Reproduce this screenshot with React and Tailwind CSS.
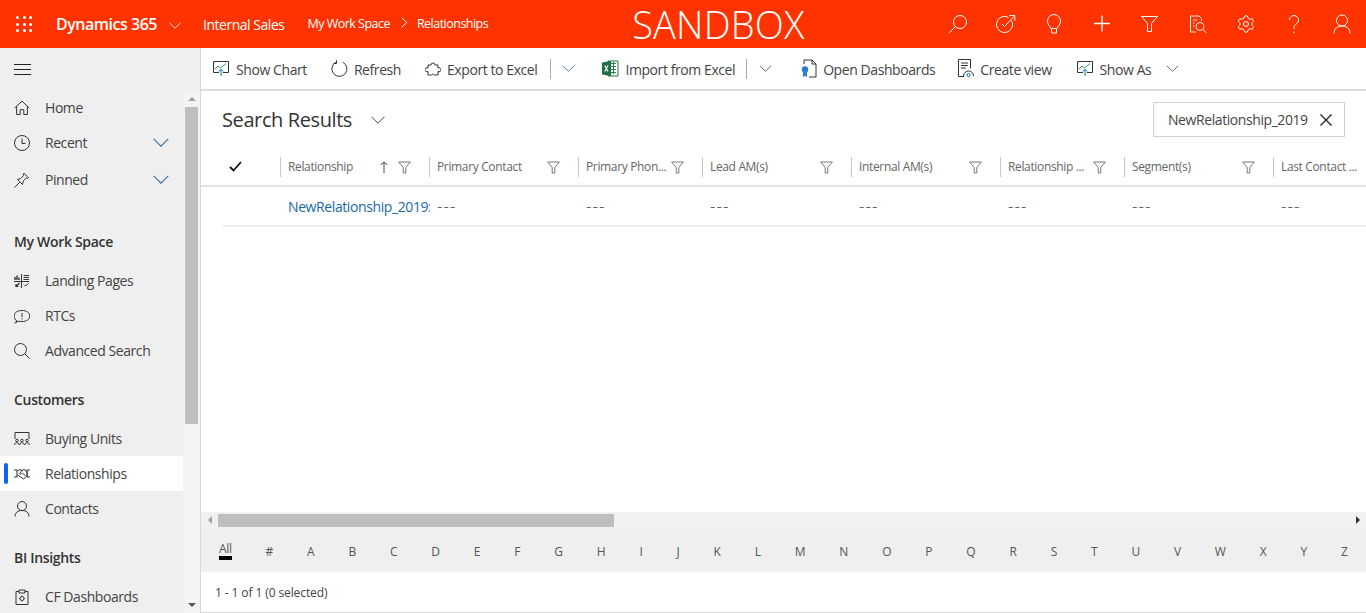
import React from "react";
import { Settings } from "lucide-react";

const font = { fontFamily: '"Open Sans", sans-serif' };

// thin line icon wrapper
const Ic = ({ size = 16, vb = 16, className = "", children, sw = 1 }) => (
  <svg
    width={size}
    height={size}
    viewBox={`0 0 ${vb} ${vb}`}
    fill="none"
    stroke="currentColor"
    strokeWidth={sw}
    className={`shrink-0 ${className}`}
  >
    {children}
  </svg>
);

const Chevron = ({ w = 14, h = 8, className = "" }) => (
  <svg width={w} height={h} viewBox="0 0 14 8" fill="none" stroke="currentColor" className={`shrink-0 ${className}`}>
    <path d="M.5.8 7 7.2 13.5.8" />
  </svg>
);

const Funnel = () => (
  <svg width="13" height="13" viewBox="0 0 13 13" fill="none" stroke="#777" className="shrink-0">
    <path d="M.6 1h11.8L7.8 6.4V12H5.2V6.4z" />
  </svg>
);

const ChartIcon = () => (
  <Ic size={17} vb={17} className="text-[#333]">
    <path d="M6 12.5H.5v-11h15v11H10" />
    <path d="M2 9l3-3 2.5 2L13 3.5" stroke="#2f9e5b" />
    <path d="M8 16V9.5M5.8 11.5 8 9.3l2.2 2.2" stroke="#106ebe" />
  </Ic>
);

const RefreshIcon = () => (
  <Ic size={17} vb={17} className="text-[#333]">
    <path d="M5 2.2a7.5 7.5 0 1 0 6.8 0" />
    <path d="M5.5.3v3.2H2.4" />
  </Ic>
);

const PuzzleIcon = () => (
  <Ic size={16} className="text-[#333]">
    <path d="M3 4h3a2 2 0 1 1 4 0h3v3a2 2 0 1 1 0 3.5V14H9.5a1.8 1.8 0 0 0-3 0H3v-3.5a2 2 0 1 1 0-3.500z" />
  </Ic>
);

const ExcelIcon = () => (
  <svg width="17" height="17" viewBox="0 0 17 17" className="shrink-0">
    <path d="M6 1h10v15H6z" fill="#fff" stroke="#1e7145" />
    <path d="M9 3.5h5M9 6.5h5M9 9.5h5M9 12.5h5M11.5 2v12" stroke="#1e7145" strokeWidth=".9" />
    <path d="M0 2.5 9 1v15l-9-1.5z" fill="#1e7145" />
    <path d="M2.8 5.5 6 11.5M6 5.5l-3.2 6" stroke="#fff" strokeWidth="1.2" />
  </svg>
);

const DashDocIcon = () => (
  <svg width="16" height="19" viewBox="0 0 16 19" fill="none" className="shrink-0">
    <path d="M3 5V1h8l4 4v13H8" stroke="#333" />
    <path d="M11 1v4h4" stroke="#333" />
    <circle cx="4" cy="10.5" r="3.2" fill="#2b7cd3" />
    <path d="M2 13v5l2-1.2L6 18v-5z" fill="#2b7cd3" />
  </svg>
);

const CreateViewIcon = () => (
  <svg width="16" height="19" viewBox="0 0 16 19" fill="none" stroke="#333" className="shrink-0">
    <path d="M6 17.5H.5V.5h12v9" />
    <path d="M3 4h7M3 6.5h7M3 9h5" />
    <path d="M5.5 17a5 5 0 0 1 10 0" />
    <circle cx="10.5" cy="16" r="1.6" stroke="#106ebe" />
  </svg>
);

const ToolButton = ({ icon, label, className = "" }) => (
  <div className={`flex items-center ${className}`}>
    {icon}
    <span className="ml-[6px] mt-[2px] text-[14px] tracking-[-0.42px] text-[#444] whitespace-nowrap">{label}</span>
  </div>
);

const navIcons = {
  home: (
    <Ic size={16}>
      <path d="M.7 8 8 1.2 15.3 8M2.6 6.5V14.5h3.6V9.7h3.6v4.8h3.6V6.5" />
    </Ic>
  ),
  clock: (
    <Ic size={16}>
      <circle cx="8" cy="8" r="7.5" />
      <path d="M8 3.5V8.5H11.5" />
    </Ic>
  ),
  pin: (
    <Ic size={16}>
      <path d="M.5 15.5 5.5 10.5M3.5 7.5l5 5 .8-3.6 3-2.900 1.400.5.8-.8L10 1.200l-.8.8.5 1.400-2.900 3z" />
    </Ic>
  ),
  landing: (
    <Ic size={16}>
      <path d="M0 8.5h15M7.5 1v14" />
      <path d="M1 7V4M3 7V2.5M5 7V4.5" strokeWidth="1.4" />
      <path d="M9.5 2.5H15M9.5 4.5H15M9.5 6.5H15" />
      <path d="M5.5 10 2 13.5M2 11v2.5h2.5" strokeWidth="1.2" />
      <path d="M10 11.5l1.5 1.5 3-2.5" />
    </Ic>
  ),
  rtc: (
    <Ic size={16}>
      <path d="M3 13c-2-1-2.800-2.700-2.800-5C.2 4.500 3.500 2.500 8 2.500s7.800 2 7.800 5.500-3.300 5.500-7.800 5.500c-1 0-2 0-3-.4L.8 15z" />
      <path d="M8 5v4.200M8 10.300v1.200" />
    </Ic>
  ),
  search: (
    <Ic size={16}>
      <circle cx="6.5" cy="6.5" r="6" />
      <path d="M10.8 10.8 15.5 15.5" />
    </Ic>
  ),
  units: (
    <Ic size={16}>
      <path d="M1 8V1.5h14V8" />
      <circle cx="3" cy="9.5" r="1.3" />
      <circle cx="8" cy="9.5" r="1.3" />
      <circle cx="13" cy="9.5" r="1.3" />
      <path d="M.5 14c0-3 4.500-3 4.500 0M5.700 14c0-3 4.600-3 4.600 0M11 14c0-3 4.500-3 4.500 0" />
    </Ic>
  ),
  handshake: (
    <Ic size={16}>
      <path d="M0 4h3v7H0M16 4h-3v7h3" />
      <path d="M3 5l3-1.500 2 1 2-1 3 1.500v5l-3.500 3-5-3.500-1.500-.5" />
      <path d="M8 4.500 5.500 7.500c1 1 2 .5 3-.5l3 3" />
    </Ic>
  ),
  user: (
    <Ic size={16}>
      <circle cx="8" cy="5" r="4.5" />
      <path d="M1 15.500c0-4 3-6 7-6s7 2 7 6" />
    </Ic>
  ),
  clipboard: (
    <Ic size={16}>
      <path d="M5 2.5H2v13h12v-13h-3" />
      <path d="M5 1h6v3H5z" />
      <circle cx="8" cy="9.5" r="2" />
      <path d="M8 6.5v1M8 11.5v1M5 9.5h1M10 9.5h1" />
    </Ic>
  ),
};

const NavItem = ({ icon, label, chevron, active }) => (
  <div className={`flex items-center h-[35px] ${active ? "bg-white" : ""}`}>
    {active ? <div className="ml-[4px] mr-[6px] w-[4px] h-[21px] rounded-full bg-[#0f62fe]" /> : <div className="w-[14px]" />}
    <span className="text-[#333]">{navIcons[icon]}</span>
    <span className="ml-[15px] text-[14px] tracking-[-0.44px] text-[#444]">{label}</span>
    {chevron && <Chevron w={16} h={9} className="ml-auto mr-[14px] text-[#3b6f9e]" />}
  </div>
);

const NavHeading = ({ label, className = "" }) => (
  <div className={`flex items-center h-[35px] pl-[14px] mb-[4px] text-[14px] font-semibold tracking-[-0.32px] text-[#333] ${className}`}>
    {label}
  </div>
);

const columns = [
  { label: "Relationship", w: "w-[149px]", sort: true },
  { label: "Primary Contact", w: "w-[149px]" },
  { label: "Primary Phon...", w: "w-[124px]" },
  { label: "Lead AM(s)", w: "w-[149px]" },
  { label: "Internal AM(s)", w: "w-[149px]" },
  { label: "Relationship ...", w: "w-[124px]" },
  { label: "Segment(s)", w: "w-[149px]" },
  { label: "Last Contact ...", w: "w-[92px]", noFilter: true },
];

const letters = ["#", "A", "B", "C", "D", "E", "F", "G", "H", "I", "J", "K", "L", "M", "N", "O", "P", "Q", "R", "S", "T", "U", "V", "W", "X", "Y", "Z"];

const topIcons = [
  <Ic size={20} vb={20}>
    <circle cx="12" cy="8" r="6.5" />
    <path d="M7.5 12.5.8 19.2" />
  </Ic>,
  <Ic size={20} vb={20}>
    <path d="M15.5 6.5a8 8 0 1 1-3-3" />
    <path d="M6 10l2.5 2.5L18 2.5M13.5 1.5h5.300v5.300" />
  </Ic>,
  <Ic size={20} vb={20}>
    <path d="M7 14.5C6 12 3.5 11 3.5 7a6.5 6.5 0 0 1 13 0c0 4-2.500 5-3.500 7.500z" />
    <path d="M7.5 14.5V19h5v-4.500" />
  </Ic>,
  <Ic size={20} vb={20} sw={1.3}>
    <path d="M10 1.5v16M2 9.5h16" />
  </Ic>,
  <Ic size={20} vb={20}>
    <path d="M1.5 2.5h16l-6 7v8h-4v-8z" />
  </Ic>,
  <Ic size={20} vb={20} className="opacity-90">
    <path d="M8 18H2.5V2H11l2.5 2.500V7" />
    <path d="M5 6h4M5 9h1.500M5 12h1.500" />
    <circle cx="12" cy="12.5" r="4" />
    <path d="M15 15.5l3.5 3.5" />
  </Ic>,
  <Settings size={20} strokeWidth={1.2} className="shrink-0" />,
  <Ic size={20} vb={20}>
    <path d="M5.5 6a4.5 4.5 0 1 1 7 3.800c-1.500 1-2.500 2-2.500 4V15M10 17.500v1.500" />
  </Ic>,
  <Ic size={20} vb={20}>
    <circle cx="10" cy="6.5" r="5.5" />
    <path d="M2 19.5c0-5 3.500-7.500 8-7.500s8 2.500 8 7.500" />
  </Ic>,
];

export default function App() {
  return (
    <div className="h-[613px] w-[1366px] overflow-hidden flex flex-col bg-white" style={font}>
      {/* Top bar */}
      <header className="h-[48px] shrink-0 bg-[#ff3300] text-white flex items-center">
        <div className="grid grid-cols-3 gap-x-[3.5px] gap-y-[3.5px] ml-[16px]">
          {Array.from({ length: 9 }).map((_, i) => (
            <span key={i} className="w-[3px] h-[3px] rounded-full bg-white" />
          ))}
        </div>
        <span className="ml-[24px] text-[16px] font-semibold tracking-[-0.48px] whitespace-nowrap">Dynamics 365</span>
        <Chevron w={12} h={7} className="ml-[12px] mt-[2px]" />
        <span className="ml-[22px] text-[14px] tracking-[-0.48px] whitespace-nowrap">Internal Sales</span>
        <span className="ml-[23px] mt-[1px] text-[12.5px] tracking-[-0.52px] whitespace-nowrap">My Work Space</span>
        <svg width="7" height="11" viewBox="0 0 7 11" fill="none" stroke="white" className="ml-[11px] mb-[3px] shrink-0">
          <path d="M.7.7 5.8 5.5.7 10.3" />
        </svg>
        <span className="ml-[9px] mt-[1px] text-[12.5px] tracking-[-0.52px] whitespace-nowrap">Relationships</span>
        <span className="ml-[144px] text-[38px] font-light leading-[48px] tracking-[0.2px] whitespace-nowrap">SANDBOX</span>
        <div className="ml-auto mr-[14px] flex items-center gap-[28px]">
          {topIcons.map((icon, i) => (
            <span key={i}>{icon}</span>
          ))}
        </div>
      </header>

      <div className="flex-1 flex min-h-0">
        {/* Left nav */}
        <aside className="w-[200px] shrink-0 bg-[#efefef] border-r border-[#d8d8d8] box-content flex flex-col overflow-hidden">
          <div className="h-[42px] shrink-0 pl-[14px] flex items-center">
            <svg width="17" height="11" viewBox="0 0 17 11" stroke="#222" className="mt-[1px]">
              <path d="M0 .5h17M0 5.5h17M0 10.5h17" />
            </svg>
          </div>
          <div className="flex-1 flex min-h-0">
            <nav className="w-[183px] shrink-0 overflow-hidden">
              <NavItem icon="home" label="Home" />
              <div className="mb-[2px]">
                <NavItem icon="clock" label="Recent" chevron />
              </div>
              <NavItem icon="pin" label="Pinned" chevron />
              <NavHeading label="My Work Space" className="mt-[27px]" />
              <NavItem icon="landing" label="Landing Pages" />
              <NavItem icon="rtc" label="RTCs" />
              <NavItem icon="search" label="Advanced Search" />
              <NavHeading label="Customers" className="mt-[14px]" />
              <NavItem icon="units" label="Buying Units" />
              <NavItem icon="handshake" label="Relationships" active />
              <NavItem icon="user" label="Contacts" />
              <NavHeading label="BI Insights" className="mt-[14px]" />
              <NavItem icon="clipboard" label="CF Dashboards" />
            </nav>
            {/* nav scrollbar */}
            <div className="w-[17px] flex flex-col pl-[2px] bg-[#f3f3f3]">
              <div className="h-[17px] w-[13px] shrink-0 flex items-center justify-center">
                <span className="border-x-[4px] border-x-transparent border-b-[4px] border-b-[#a0a0a0]" />
              </div>
              <div className="w-[13px] h-[317px] shrink-0 bg-[#bebebe]" />
              <div className="mt-auto h-[17px] w-[13px] shrink-0 flex items-center justify-center">
                <span className="border-x-[4px] border-x-transparent border-t-[4px] border-t-[#555]" />
              </div>
            </div>
          </div>
        </aside>

        {/* Main */}
        <main className="flex-1 min-w-0 flex flex-col">
          {/* Command bar */}
          <div className="h-[43px] shrink-0 border-b-2 border-[#dcdcdc] flex items-center pl-[12px]">
            <ToolButton icon={<ChartIcon />} label="Show Chart" />
            <ToolButton icon={<RefreshIcon />} label="Refresh" className="ml-[24px]" />
            <ToolButton icon={<PuzzleIcon />} label="Export to Excel" className="ml-[24px]" />
            <div className="ml-[13px] w-px h-[20px] bg-[#aaa]" />
            <Chevron w={13} h={7} className="ml-[11px] text-[#3b6f9e]" />
            <ToolButton icon={<ExcelIcon />} label="Import from Excel" className="ml-[27px]" />
            <div className="ml-[11px] w-px h-[20px] bg-[#aaa]" />
            <Chevron w={13} h={7} className="ml-[12px] text-[#555]" />
            <ToolButton icon={<DashDocIcon />} label="Open Dashboards" className="ml-[29px]" />
            <ToolButton icon={<CreateViewIcon />} label="Create view" className="ml-[23px]" />
            <ToolButton icon={<ChartIcon />} label="Show As" className="ml-[25px]" />
            <Chevron w={13} h={7} className="ml-[15px] text-[#555]" />
          </div>

          {/* Title row */}
          <div className="h-[57px] shrink-0 flex items-center pl-[21px] pr-[21px]">
            <h1 className="text-[20px] font-normal tracking-[-0.4px] text-[#333] whitespace-nowrap">Search Results</h1>
            <Chevron w={16} h={8} className="ml-[18px] text-[#444]" />
            <div className="ml-auto h-[35px] w-[192px] border border-[#d2d2d2] flex items-center pl-[14px]">
              <span className="text-[14px] tracking-[-0.42px] text-[#444] whitespace-nowrap">NewRelationship_2019</span>
              <svg width="12" height="12" viewBox="0 0 12 12" stroke="#222" strokeWidth="1.3" className="ml-auto mr-[12px] shrink-0">
                <path d="M.5.5l11 11M11.5.5l-11 11" />
              </svg>
            </div>
          </div>

          {/* Grid header */}
          <div className="h-[39px] shrink-0 border-b-2 border-[#e2e2e2] flex items-center overflow-hidden">
            <div className="w-[80px] shrink-0 pl-[28px]">
              <svg width="13" height="11" viewBox="0 0 13 11" fill="none" stroke="#111" strokeWidth="1.8">
                <path d="M1 6l3.500 3.500L12 1" />
              </svg>
            </div>
            {columns.map((col) => (
              <div key={col.label} className={`${col.w} shrink-0 h-[20px] mt-[1px] -ml-px mr-px border-l border-[#c8c8c8] pl-[7px] pr-[18px] flex items-center`}>
                <span className="text-[12px] tracking-[-0.35px] text-[#666] whitespace-nowrap">{col.label}</span>
                {col.sort && (
                  <svg width="8" height="12" viewBox="0 0 8 12" fill="none" stroke="#444" className="ml-auto mr-[10px] shrink-0">
                    <path d="M4 12V1M.8 4 4 .8 7.2 4" />
                  </svg>
                )}
                {!col.noFilter && <span className={col.sort ? "" : "ml-auto"}><Funnel /></span>}
              </div>
            ))}
          </div>

          {/* Grid row */}
          <div className="ml-[21px] h-[40px] shrink-0 border-b-2 border-[#f0f0f0] flex items-center overflow-hidden">
            <div className="w-[59px] shrink-0" />
            {columns.map((col, i) => (
              <div key={col.label} className={`${col.w} shrink-0 pl-[7px] mt-[1px] leading-[24px] text-[14px] text-[#444] whitespace-nowrap ${i === 0 ? "overflow-hidden" : ""}`}>
                {i === 0 ? (
                  <span className="text-[#1b6aa8] tracking-[-0.4px]">NewRelationship_2019:</span>
                ) : (
                  <span className="text-[17px] font-light tracking-[1px]">---</span>
                )}
              </div>
            ))}
          </div>

          <div className="flex-1" />

          {/* Horizontal scrollbar */}
          <div className="h-[16px] shrink-0 bg-[#f1f1f1] flex items-center">
            <div className="w-[17px] flex justify-center">
              <span className="border-y-[4px] border-y-transparent border-r-[4px] border-r-[#a0a0a0]" />
            </div>
            <div className="w-[396px] h-[13px] bg-[#bebebe]" />
            <div className="ml-auto w-[17px] flex justify-center">
              <span className="border-y-[4px] border-y-transparent border-l-[4px] border-l-[#333]" />
            </div>
          </div>

          {/* Jump bar */}
          <div className="h-[44px] shrink-0 bg-[#efefef] flex items-center justify-between pl-[18px] pr-[18px] pt-[4px] text-[12px] text-[#555]">
            <span className="border-b-[4px] border-black leading-[14px] tracking-[-0.3px] -mt-[2px]">All</span>
            {letters.map((l) => (
              <span key={l}>{l}</span>
            ))}
          </div>

          {/* Footer */}
          <div className="h-[41px] shrink-0 border-b border-[#d8d8d8] flex items-center pl-[14px] pt-[2px]">
            <span className="text-[12px] tracking-[-0.1px] text-[#444]">1 - 1 of 1 (0 selected)</span>
          </div>
        </main>
      </div>
    </div>
  );
}
